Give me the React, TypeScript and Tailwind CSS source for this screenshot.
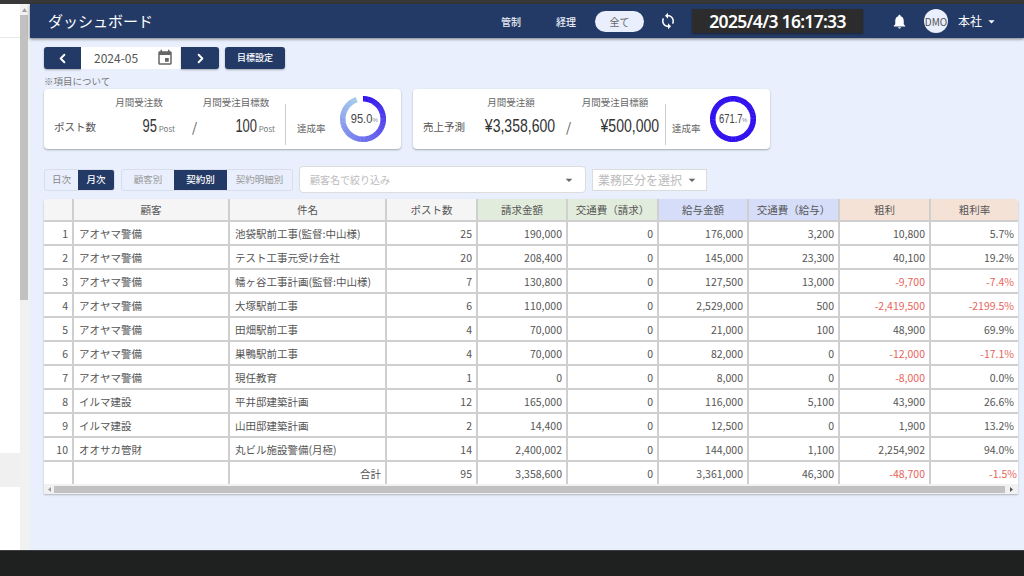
import { ChevronLeft, ChevronRight } from "lucide-react";

const rows = [
  ["アオヤマ警備", "池袋駅前工事(監督:中山様)", "25", "190,000", "0", "176,000", "3,200", "10,800", "5.7%"],
  ["アオヤマ警備", "テスト工事元受け会社", "20", "208,400", "0", "145,000", "23,300", "40,100", "19.2%"],
  ["アオヤマ警備", "幡ヶ谷工事計画(監督:中山様)", "7", "130,800", "0", "127,500", "13,000", "-9,700", "-7.4%"],
  ["アオヤマ警備", "大塚駅前工事", "6", "110,000", "0", "2,529,000", "500", "-2,419,500", "-2199.5%"],
  ["アオヤマ警備", "田畑駅前工事", "4", "70,000", "0", "21,000", "100", "48,900", "69.9%"],
  ["アオヤマ警備", "巣鴨駅前工事", "4", "70,000", "0", "82,000", "0", "-12,000", "-17.1%"],
  ["アオヤマ警備", "現任教育", "1", "0", "0", "8,000", "0", "-8,000", "0.0%"],
  ["イルマ建設", "平井邸建築計画", "12", "165,000", "0", "116,000", "5,100", "43,900", "26.6%"],
  ["イルマ建設", "山田邸建築計画", "2", "14,400", "0", "12,500", "0", "1,900", "13.2%"],
  ["オオサカ管財", "丸ビル施設警備(月極)", "14", "2,400,002", "0", "144,000", "1,100", "2,254,902", "94.0%"],
];

const heads = [
  { label: "", bg: "bg-[#f5f5f5]", w: "w-[29px]" },
  { label: "顧客", bg: "bg-[#f5f5f5]", w: "w-[156px]" },
  { label: "件名", bg: "bg-[#f5f5f5]", w: "w-[157px]" },
  { label: "ポスト数", bg: "bg-[#f5f5f5]", w: "w-[91px]" },
  { label: "請求金額", bg: "bg-[#e2ecdc]", w: "w-[90px]" },
  { label: "交通費（請求）", bg: "bg-[#e2ecdc]", w: "w-[91px]" },
  { label: "給与金額", bg: "bg-[#d6ddf8]", w: "w-[90px]" },
  { label: "交通費（給与）", bg: "bg-[#d6ddf8]", w: "w-[91px]" },
  { label: "粗利", bg: "bg-[#f5e2d7]", w: "w-[91px]" },
  { label: "粗利率", bg: "bg-[#f5e2d7]", w: "w-[88px]" },
];

// donut drawn as short arcs so the colour can run along the ring
function Donut({ pct, value, squeeze }: { pct: number; value: string; squeeze: string }) {
  const r = 20.25;
  const steps = 90;
  const filled = Math.min(pct, 100) / 100;
  const arcs = [];
  for (let i = 0; i < steps; i++) {
    const t0 = (i / steps) * filled;
    const t1 = ((i + 1.3) / steps) * filled;
    const a0 = t0 * 2 * Math.PI - Math.PI / 2;
    const a1 = Math.min(t1, filled) * 2 * Math.PI - Math.PI / 2;
    const mix = pct >= 100 ? 0 : i / steps;
    const c = `rgb(${Math.round(48 + mix * 120)},${Math.round(16 + mix * 190)},${Math.round(238 - mix * 2)})`;
    arcs.push(
      <path
        key={i}
        d={`M${23 + r * Math.cos(a0)} ${23 + r * Math.sin(a0)} A${r} ${r} 0 0 1 ${23 + r * Math.cos(a1)} ${23 + r * Math.sin(a1)}`}
        fill="none"
        stroke={c}
        strokeWidth="5.5"
      />
    );
  }
  return (
    <div className="relative w-[46px] h-[46px] shrink-0">
      <svg width="46" height="46" viewBox="0 0 46 46">
        {arcs}
      </svg>
      <div className="absolute inset-0 flex items-center justify-center text-[#444] text-[13px] leading-none [font-family:'Liberation_Sans',sans-serif] pb-[1px]">
        <span className={`inline-block origin-right ${squeeze}`}>{value}</span>
        <span className="text-[6px] text-[#888] mt-[3px]">%</span>
      </div>
    </div>
  );
}

function Kpi(props: {
  title: string;
  labelW: string;
  colW: string;
  slashW: string;
  head1: string;
  head2: string;
  val1: string;
  val2: string;
  val1Pad: string;
  unit?: string;
  pct: number;
  pctText: string;
  numSqueeze: string;
  pctSqueeze: string;
  rateGap: string;
  dividerGap: string;
  donutGap: string;
}) {
  const num = `inline-block origin-right whitespace-nowrap ${props.numSqueeze} text-[#333] text-[18px] leading-none [font-family:'Liberation_Sans',sans-serif]`;
  const head = "text-center text-[#666] text-[9.5px] leading-[14px] whitespace-nowrap";
  return (
    <div className="w-[357px] h-[60px] bg-white rounded-[4px] shadow-[0_1px_2px_rgba(0,0,0,0.3)] flex items-start pl-[10px]">
      <div className={`${props.labelW} mt-[31px] text-[10.5px] leading-[14px] text-[#555]`}>{props.title}</div>
      <div className={`${props.colW} pt-[6px]`}>
        <div className={head}>{props.head1}</div>
        <div className={`flex justify-end items-end h-[18px] mt-[8px] ${props.val1Pad}`}>
          <span className={num}>{props.val1}</span>
          {props.unit && <span className="text-[8px] leading-[12px] text-[#777] ml-[2px]">{props.unit}</span>}
        </div>
      </div>
      <div className={`${props.slashW} mt-[30px] text-right text-[13px] leading-[16px] text-[#555]`}>/</div>
      <div className={`${props.colW} pt-[6px]`}>
        <div className={head}>{props.head2}</div>
        <div className="flex justify-end items-end h-[18px] mt-[8px]">
          <span className={num}>{props.val2}</span>
          {props.unit && <span className="text-[8px] leading-[12px] text-[#777] ml-[2px]">{props.unit}</span>}
        </div>
      </div>
      <div className={`${props.dividerGap} w-px h-[41px] mt-[15px] bg-[#ccc]`}></div>
      <div className={`${props.rateGap} mt-[32px] text-[9.5px] leading-[14px] text-[#666]`}>達成率</div>
      <div className={`${props.donutGap} mt-[7px]`}>
        <Donut pct={props.pct} value={props.pctText} squeeze={props.pctSqueeze} />
      </div>
    </div>
  );
}

export default function App() {
  return (
    <div className="w-[1024px] h-[576px] overflow-hidden flex flex-col [font-family:'Noto_Sans_CJK_JP','Noto_Sans',sans-serif] bg-white">
      <div className="h-[4px] bg-[#383838] shrink-0"></div>
      <div className="flex h-[546px] shrink-0">
        {/* left panel */}
        <div className="w-[20px] bg-white flex flex-col">
          <div className="h-[34px] border-b border-[#e8e8e8]"></div>
          <div className="h-[415px]"></div>
          <div className="h-[34px] bg-[#f0f0f0]"></div>
        </div>
        <div className="w-[10px] bg-[#f1f1f1] flex flex-col">
          <div className="h-[11px] flex items-center justify-center w-[8px]">
            <svg width="5" height="4" viewBox="0 0 5 4"><path d="M2.5 0L5 4H0z" fill="#a0a0a0" /></svg>
          </div>
          <div className="h-[285px] w-[8px] bg-[#c1c1c1]"></div>
        </div>

        <div className="flex-1 bg-[#e9effc] flex flex-col">
          {/* header */}
          <div className="h-[34px] bg-[#243a66] shadow-[0_1px_3px_rgba(0,0,0,0.5)] flex items-center text-white shrink-0">
            <div className="ml-[18px] mt-[1px] text-[15px] w-[453px]">ダッシュボード</div>
            <div className="w-[55px] text-[10px] font-medium text-[#e6ebf5]">管制</div>
            <div className="w-[39px] text-[10px] font-medium text-[#e6ebf5]">経理</div>
            <div className="w-[49px] h-[21px] rounded-full bg-[#e9effc] text-[#666] text-[10px] flex items-center justify-center">全て</div>
            <svg className="ml-[15px]" width="18" height="18" viewBox="0 0 24 24" fill="#fff">
              <path d="M12 4V1L8 5l4 4V6c3.31 0 6 2.69 6 6 0 1.01-.25 1.97-.7 2.8l1.46 1.46C19.54 15.03 20 13.57 20 12c0-4.42-3.58-8-8-8zm0 14c-3.31 0-6-2.69-6-6 0-1.01.25-1.97.7-2.8L5.24 7.74C4.46 8.97 4 10.43 4 12c0 4.42 3.58 8 8 8v3l4-4-4-4v3z" />
            </svg>
            <div className="ml-[15px] w-[171px] h-[24px] bg-[#2c2c2c] shadow-[0_1px_2px_rgba(0,0,0,0.4)] flex items-center justify-center text-[17.5px] font-semibold [font-family:'Noto_Sans','Noto_Sans_CJK_JP',sans-serif] tracking-[-0.7px]">
              2025/4/3 16:17:33
            </div>
            <svg className="ml-[28px]" width="17" height="17" viewBox="0 0 24 24" fill="#fff">
              <path d="M12 22c1.1 0 2-.9 2-2h-4c0 1.1.89 2 2 2zm6-6v-5c0-3.07-1.64-5.64-4.5-6.32V4c0-.83-.67-1.5-1.5-1.5s-1.5.67-1.5 1.5v.68C7.63 5.36 6 7.92 6 11v5l-2 2v1h16v-1l-2-2z" />
            </svg>
            <div className="ml-[16px] w-[24px] h-[24px] rounded-full bg-[#e9effc] text-[#555] text-[10px] flex items-center justify-center">DMO</div>
            <div className="ml-[10px] text-[12px]">本社</div>
            <svg className="ml-[2px]" width="15" height="15" viewBox="0 0 24 24" fill="#fff"><path d="M7 10l5 5 5-5z" /></svg>
          </div>

          <div className="pl-[14px] pt-[9px]">
            {/* date row */}
            <div className="flex h-[22px]">
              <button className="w-[37px] bg-[#243a66] rounded-l-[3px] flex items-center justify-center shadow-[0_1px_2px_rgba(0,0,0,0.3)]">
                <ChevronLeft size={15} color="#fff" strokeWidth={3} />
              </button>
              <div className="w-[100px] bg-white flex items-center pl-[13px] text-[12px] text-[#555]">
                <span>2024-05</span>
                <svg className="ml-[18px]" width="18" height="18" viewBox="0 0 24 24" fill="#666">
                  <path d="M17 12h-5v5h5v-5zM16 1v2H8V1H6v2H5c-1.11 0-1.99.9-1.99 2L3 19c0 1.1.89 2 2 2h14c1.1 0 2-.9 2-2V5c0-1.1-.9-2-2-2h-1V1h-2zm3 18H5V8h14v11z" />
                </svg>
              </div>
              <button className="w-[38px] bg-[#243a66] rounded-r-[3px] flex items-center justify-center shadow-[0_1px_2px_rgba(0,0,0,0.3)]">
                <ChevronRight size={15} color="#fff" strokeWidth={3} />
              </button>
              <button className="ml-[6px] w-[60px] bg-[#243a66] rounded-[3px] text-white text-[9px] font-medium shadow-[0_1px_2px_rgba(0,0,0,0.3)]">目標設定</button>
            </div>
            <div className="mt-[5px] h-[15px] text-[9.5px] leading-[15px] text-[#777]">※項目について</div>

            {/* kpi cards */}
            <div className="flex gap-[12px]">
              <Kpi
                title="ポスト数"
                labelW="w-[46px]"
                colW="w-[78px]"
                slashW="w-[19px]"
                head1="月間受注数"
                head2="月間受注目標数"
                val1="95"
                val2="100"
                val1Pad="pr-[3px]"
                unit="Post"
                pct={95}
                pctText="95.0"
                numSqueeze="scale-x-[0.72]"
                pctSqueeze="scale-x-[0.85]"
                dividerGap="ml-[10px]"
                rateGap="ml-[11px]"
                donutGap="ml-[14px]"
              />
              <Kpi
                title="売上予測"
                labelW="w-[44px]"
                colW="w-[88px]"
                slashW="w-[16px]"
                head1="月間受注額"
                head2="月間受注目標額"
                val1="¥3,358,600"
                val2="¥500,000"
                val1Pad=""
                pct={671.7}
                pctText="671.7"
                numSqueeze="scale-x-[0.78]"
                pctSqueeze="scale-x-[0.72] -ml-[8px]"
                dividerGap="ml-[6px]"
                rateGap="ml-[6px]"
                donutGap="ml-[9px]"
              />
            </div>

            {/* filters */}
            <div className="flex items-center h-[27px] mt-[17px] text-[9.5px]">
              <div className="flex h-[22px] rounded-[3px] border border-[#d8deea] overflow-hidden">
                <div className="w-[33px] flex items-center justify-center text-[#888]">日次</div>
                <div className="w-[36px] flex items-center justify-center bg-[#243a66] text-white font-medium">月次</div>
              </div>
              <div className="ml-[6px] flex h-[22px] rounded-[3px] border border-[#d8deea] overflow-hidden text-[#999]">
                <div className="w-[52px] flex items-center justify-center">顧客別</div>
                <div className="w-[53px] flex items-center justify-center bg-[#243a66] text-white font-medium">契約別</div>
                <div className="w-[65px] flex items-center justify-center">契約明細別</div>
              </div>
              <div className="ml-[6px] w-[287px] h-[27px] bg-white border border-[#dcdcdc] rounded-[4px] flex items-center justify-between pl-[10px] pr-[8px] text-[#bbb] text-[10px]">
                <span>顧客名で絞り込み</span>
                <svg width="16" height="16" viewBox="0 0 24 24" fill="#666"><path d="M7 10l5 5 5-5z" /></svg>
              </div>
              <div className="ml-[6px] w-[115px] h-[22px] bg-white border border-[#dcdcdc] flex items-center pl-[5px] text-[#bbb] text-[12px]">
                <span>業務区分を選択</span>
                <svg className="ml-[2px]" width="16" height="16" viewBox="0 0 24 24" fill="#666"><path d="M7 10l5 5 5-5z" /></svg>
              </div>
            </div>

            {/* table */}
            <div className="w-[974px] mt-[6px] rounded-t-[3px] overflow-hidden shadow-[0_1px_2px_rgba(0,0,0,0.25)] bg-white">
              <table className="w-[974px] table-fixed border-collapse text-[10.5px] text-[#555]">
                <thead>
                  <tr className="h-[22px]">
                    {heads.map((h, i) => (
                      <th key={i} className={`${h.w} ${h.bg} font-normal text-center p-0 pt-[1px] border-r-2 border-b-2 border-[#cfcfcf] last:border-r-0`}>
                        {h.label}
                      </th>
                    ))}
                  </tr>
                </thead>
                <tbody>
                  {rows.map((row, i) => (
                    <tr key={i} className="h-[24px]">
                      <td className="text-right pr-[4px] pt-[2px] border-r-2 border-b-2 border-[#cfcfcf]">{i + 1}</td>
                      {row.map((cell, j) => (
                        <td
                          key={j}
                          className={`${j < 2 ? "text-left pl-[5px]" : "text-right pr-[4px]"} ${
                            j >= 7 && cell.startsWith("-") ? "text-[#e8645a]" : ""
                          } pt-[2px] border-b-2 border-[#cfcfcf] whitespace-nowrap ${j < 8 ? "border-r-2" : "pr-[1px]"}`}
                        >
                          {cell}
                        </td>
                      ))}
                    </tr>
                  ))}
                  <tr className="h-[23px]">
                    <td className="border-r-2 border-[#cfcfcf]"></td>
                    <td className="border-r-2 border-[#cfcfcf]"></td>
                    <td className="text-right pr-[4px] pt-[2px] border-r-2 border-[#cfcfcf]">合計</td>
                    <td className="text-right pr-[4px] pt-[2px] border-r-2 border-[#cfcfcf]">95</td>
                    <td className="text-right pr-[4px] pt-[2px] border-r-2 border-[#cfcfcf]">3,358,600</td>
                    <td className="text-right pr-[4px] pt-[2px] border-r-2 border-[#cfcfcf]">0</td>
                    <td className="text-right pr-[4px] pt-[2px] border-r-2 border-[#cfcfcf]">3,361,000</td>
                    <td className="text-right pr-[4px] pt-[2px] border-r-2 border-[#cfcfcf]">46,300</td>
                    <td className="text-right pr-[4px] pt-[2px] border-r-2 border-[#cfcfcf] text-[#e8645a]">-48,700</td>
                    <td className="text-right pr-[1px] pt-[2px] text-[#e8645a]">-1.5%</td>
                  </tr>
                </tbody>
              </table>
              {/* horizontal scrollbar */}
              <div className="h-[10px] bg-[#f1f1f1] flex items-center">
                <div className="w-[10px] flex justify-center">
                  <svg width="3" height="5" viewBox="0 0 3 5"><path d="M3 0v5L0 2.5z" fill="#999" /></svg>
                </div>
                <div className="w-[951px] h-[7px] bg-[#c1c1c1]"></div>
                <div className="flex-1 flex justify-center">
                  <svg width="3" height="5" viewBox="0 0 3 5"><path d="M0 0v5l3-2.5z" fill="#555" /></svg>
                </div>
              </div>
            </div>
          </div>
        </div>
      </div>
      <div className="h-[26px] bg-[#1f2020] shrink-0 border-t border-[#3a3d42]"></div>
    </div>
  );
}
